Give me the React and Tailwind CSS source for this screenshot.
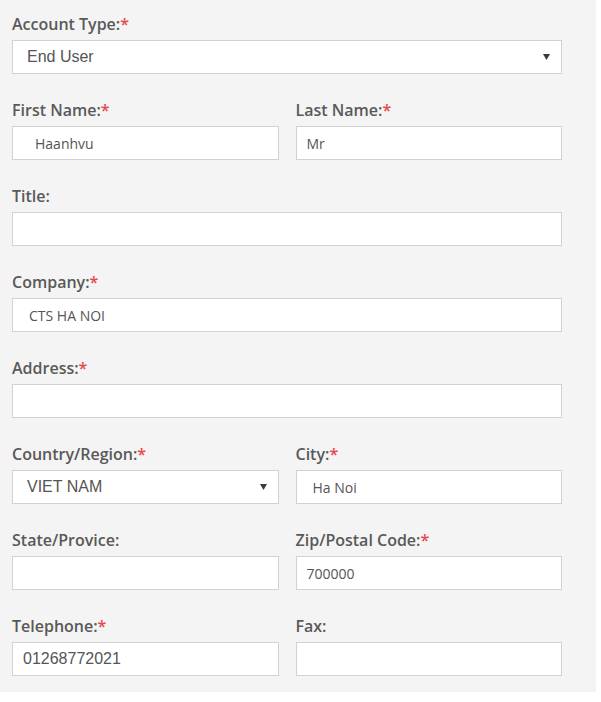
import React from "react";

const labelCls =
  "block h-[22px] mb-[5px] text-[16px] leading-[22px] font-semibold text-[#595959] font-['Open_Sans',sans-serif]";

function Label({ text, req }) {
  return (
    <label className={labelCls}>
      {text}
      {req && <span className="text-[#e8474c]">*</span>}
    </label>
  );
}

function Arrow() {
  return (
    <svg width="7" height="6" viewBox="0 0 7 6" className="shrink-0">
      <path d="M0 0H7L3.5 6Z" fill="#3a3a3a" />
    </svg>
  );
}

function Box({ children, arial, pl = 10, select }) {
  const plCls = {
    10: "pl-[10px]",
    11: "pl-[11px]",
    14: "pl-[14px]",
    16: "pl-[16px]",
    22: "pl-[22px]",
  }[pl];
  return (
    <div
      className={`h-[34px] bg-white border border-[#d2d2d2] flex items-center pr-[11px] ${plCls} text-[#555] ${
        arial
          ? "font-['Liberation_Sans',Arial,sans-serif] text-[16px]"
          : "font-['Open_Sans',sans-serif] text-[14px]"
      }`}
    >
      <span className="flex-1 whitespace-nowrap overflow-hidden">{children}</span>
      {select && <Arrow />}
    </div>
  );
}

function Field({ label, req, children, last }) {
  return (
    <div className={last ? "" : "mb-[25px]"}>
      <Label text={label} req={req} />
      {children}
    </div>
  );
}

export default function App() {
  return (
    <div className="bg-white w-[601px] h-[702px]">
      <div className="bg-[#f4f4f4] w-[596px] pt-[13px] pb-[16px] pl-[12px] pr-[34px]">
        <Field label="Account Type:" req>
          <Box arial pl={14} select>
            End User
          </Box>
        </Field>
        <div className="grid grid-cols-2 gap-x-[17px]">
          <Field label="First Name:" req>
            <Box pl={22}>Haanhvu</Box>
          </Field>
          <Field label="Last Name:" req>
            <Box pl={10}>Mr</Box>
          </Field>
        </div>
        <Field label="Title:">
          <Box> </Box>
        </Field>
        <Field label="Company:" req>
          <Box pl={16}>CTS HA NOI</Box>
        </Field>
        <Field label="Address:" req>
          <Box> </Box>
        </Field>
        <div className="grid grid-cols-2 gap-x-[17px]">
          <Field label="Country/Region:" req>
            <Box arial pl={14} select>
              VIET NAM
            </Box>
          </Field>
          <Field label="City:" req>
            <Box pl={16}>Ha Noi</Box>
          </Field>
          <Field label="State/Provice:">
            <Box> </Box>
          </Field>
          <Field label="Zip/Postal Code:" req>
            <Box pl={10}>700000</Box>
          </Field>
          <Field label="Telephone:" req last>
            <Box arial pl={10}>
              01268772021
            </Box>
          </Field>
          <Field label="Fax:" last>
            <Box> </Box>
          </Field>
        </div>
      </div>
    </div>
  );
}
